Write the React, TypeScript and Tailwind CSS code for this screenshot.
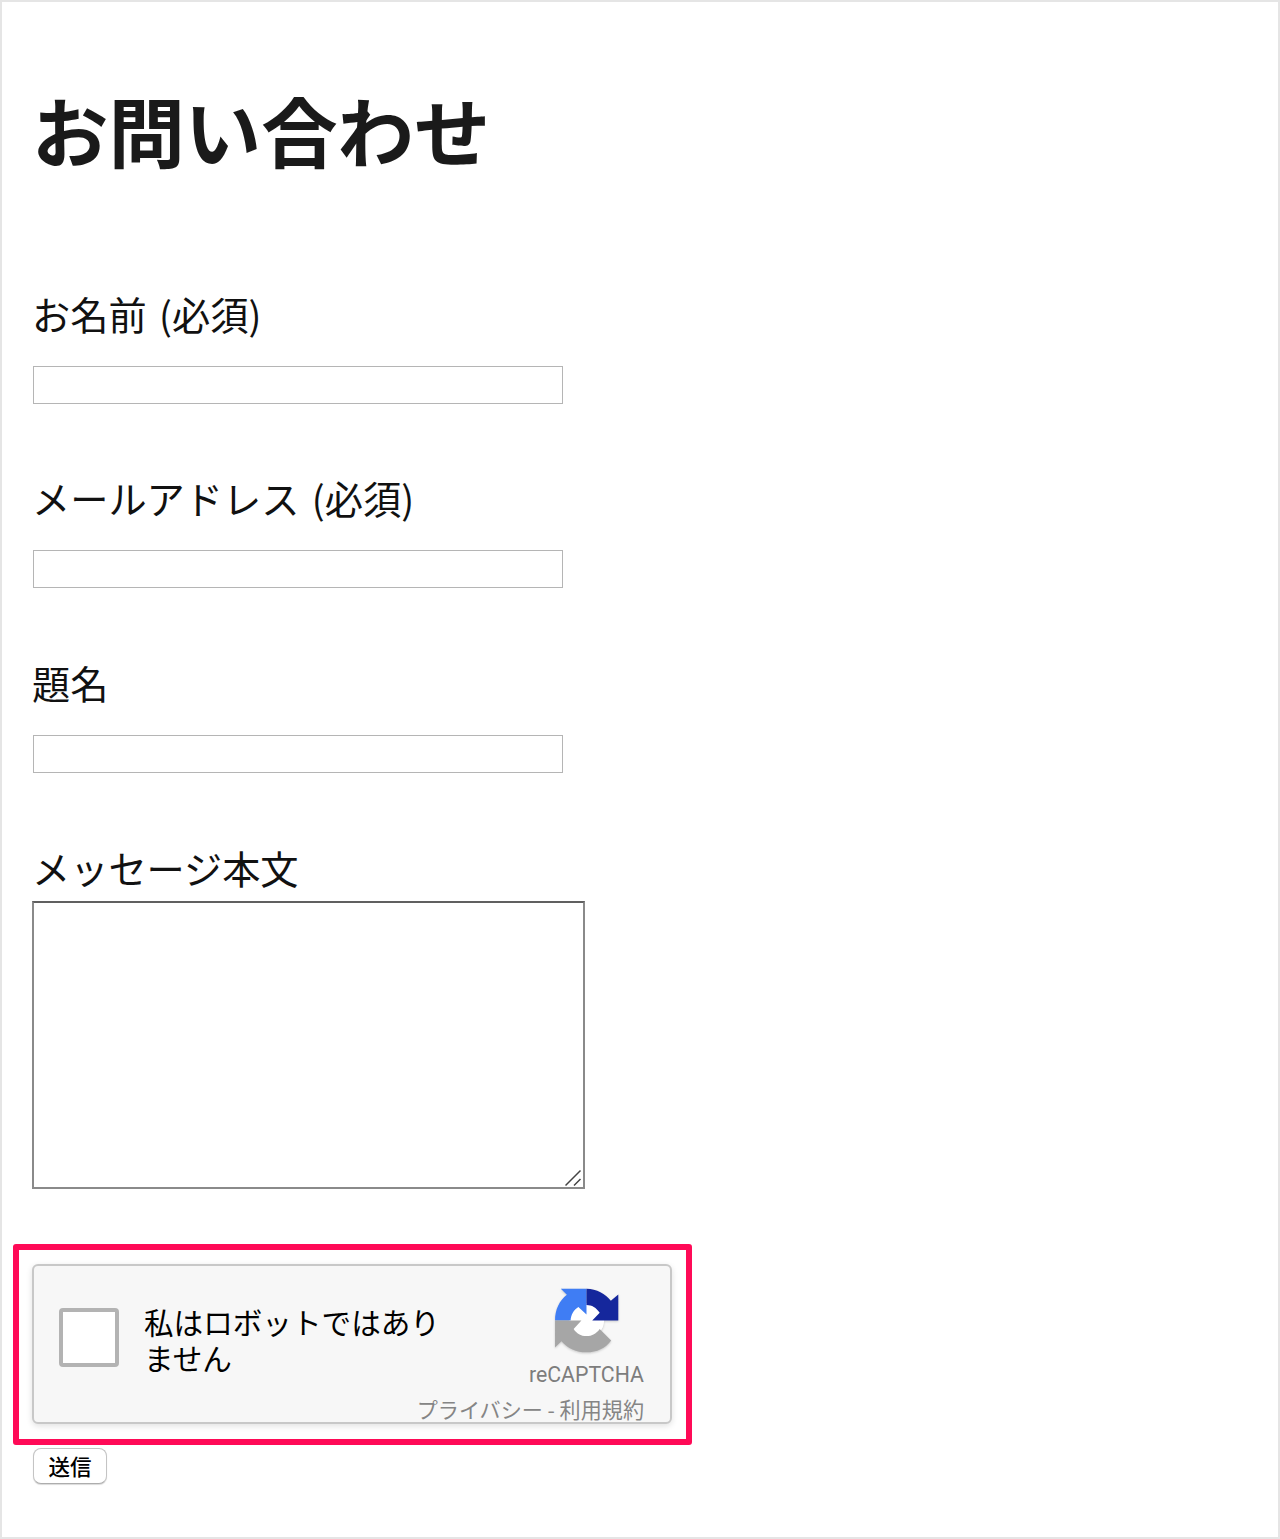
interface TextField {
  id: string;
  label: string;
  type: string;
  className: string;
}

const FIELDS: TextField[] = [
  { id: "name", label: "お名前 (必須)", type: "text", className: "mb-[70px]" },
  {
    id: "email",
    label: "メールアドレス (必須)",
    type: "email",
    className: "mb-[71px]",
  },
  { id: "subject", label: "題名", type: "text", className: "mb-[71px]" },
];

function RecaptchaLogo() {
  return (
    <svg
      viewBox="42 23 201 201"
      className="w-[68px] h-[68px] drop-shadow-[0_1px_1px_rgba(0,0,0,0.18)]"
      aria-hidden="true"
    >
      <circle cx="141" cy="122" r="52" fill="#fff" />
      <path
        d="M65 28H141V104L117 82C103 91 95 105 94 122H48C48 90 61 63 83 46Z"
        fill="#3f7df4"
      />
      <path
        d="M141 28C171 29 197 42 213 64L235 45V122H158L180 99C170 84 157 76 141 76Z"
        fill="#15279c"
      />
      <path
        d="M48 122H126L103 147C112 161 124 168 141 168C158 168 170 161 180 147L214 181C197 204 172 216 141 216C111 216 85 204 67 183L48 202Z"
        fill="#a6a6a6"
      />
    </svg>
  );
}

function Recaptcha() {
  return (
    <div className="flex w-[640px] h-[160px] border-2 border-[#c8c8c8] rounded-[6px] bg-[#f7f7f7] shadow-[0_2px_6px_rgba(0,0,0,0.12)]">
      <button
        type="button"
        role="checkbox"
        aria-checked="false"
        aria-label="私はロボットではありません"
        className="shrink-0 mt-[42px] ml-[25px] w-[60px] h-[59px] border-4 border-[#b3b3b3] rounded-[4px] bg-white"
      />
      <p className="shrink-0 mt-[38px] ml-[25px] text-[29.6px] leading-[36px] text-black whitespace-nowrap">
        私はロボットではあり
        <br />
        ません
      </p>
      <div className="-ml-[40px] mr-[26px] grow flex flex-col items-end pt-[21px] text-[#858585]">
        <div className="w-[115px] flex justify-center">
          <RecaptchaLogo />
        </div>
        <span className="mt-[8px] font-[Roboto] text-[21.3px] leading-[24px] text-[#7d7d7d] whitespace-nowrap">
          reCAPTCHA
        </span>
        <span className="mt-[8px] text-[21.1px] leading-[28px] whitespace-nowrap">
          プライバシー - 利用規約
        </span>
      </div>
    </div>
  );
}

export default function App() {
  return (
    <main className="w-[1280px] h-[1539px] border-2 border-[#e5e5e5] bg-white pl-[30px] text-[#111] font-['Noto_Sans_CJK_JP',sans-serif]">
      <h1 className="pt-[77px] text-[76.4px] leading-[100px] font-bold text-[#1a1a1a]">
        お問い合わせ
      </h1>

      <form className="mt-[111px]" onSubmit={(e) => e.preventDefault()}>
        {FIELDS.map((field) => (
          <div key={field.id} className={field.className}>
            <label
              htmlFor={field.id}
              className="block h-[76px] text-[38.2px] leading-[48px] [word-spacing:4px] whitespace-pre"
            >
              {field.label}
            </label>
            <input
              id={field.id}
              type={field.type}
              className="block ml-px w-[530px] h-[38px] border border-[#b5b5b5] bg-white px-2 text-2xl outline-none"
            />
          </div>
        ))}

        <label
          htmlFor="message"
          className="block h-[57px] text-[38.2px] leading-[48px]"
        >
          メッセージ本文
        </label>
        <div className="relative w-[553px] h-[288px]">
          <textarea
            id="message"
            className="block w-full h-full resize-none border-2 border-[#8a8a8a] border-t-[#606060] bg-white p-1 text-2xl outline-none"
          />
          {/* Resize grip */}
          <svg
            viewBox="0 0 18 18"
            className="absolute right-[2px] bottom-[2px] w-[18px] h-[18px] pointer-events-none"
            fill="none"
            stroke="#444"
            strokeWidth="1.5"
          >
            <path d="M0.5 16.5L15.5 1.5M9 16.5L15.5 10" />
          </svg>
        </div>

        <div className="mt-[55px] -ml-[19px] w-[679px] h-[201px] border-[6px] border-[#ff0a57] rounded-[3px] pt-[14px] pl-[13px]">
          <Recaptcha />
        </div>

        <button
          type="submit"
          className="flex items-center justify-center mt-[3px] ml-px w-[74px] h-[36px] border border-[#c4c4c4] border-b-[#adadad] rounded-[8px] bg-white text-[21.5px] leading-[30px] font-medium text-black shadow-[0_1px_1px_rgba(0,0,0,0.15)]"
        >
          送信
        </button>
      </form>
    </main>
  );
}
